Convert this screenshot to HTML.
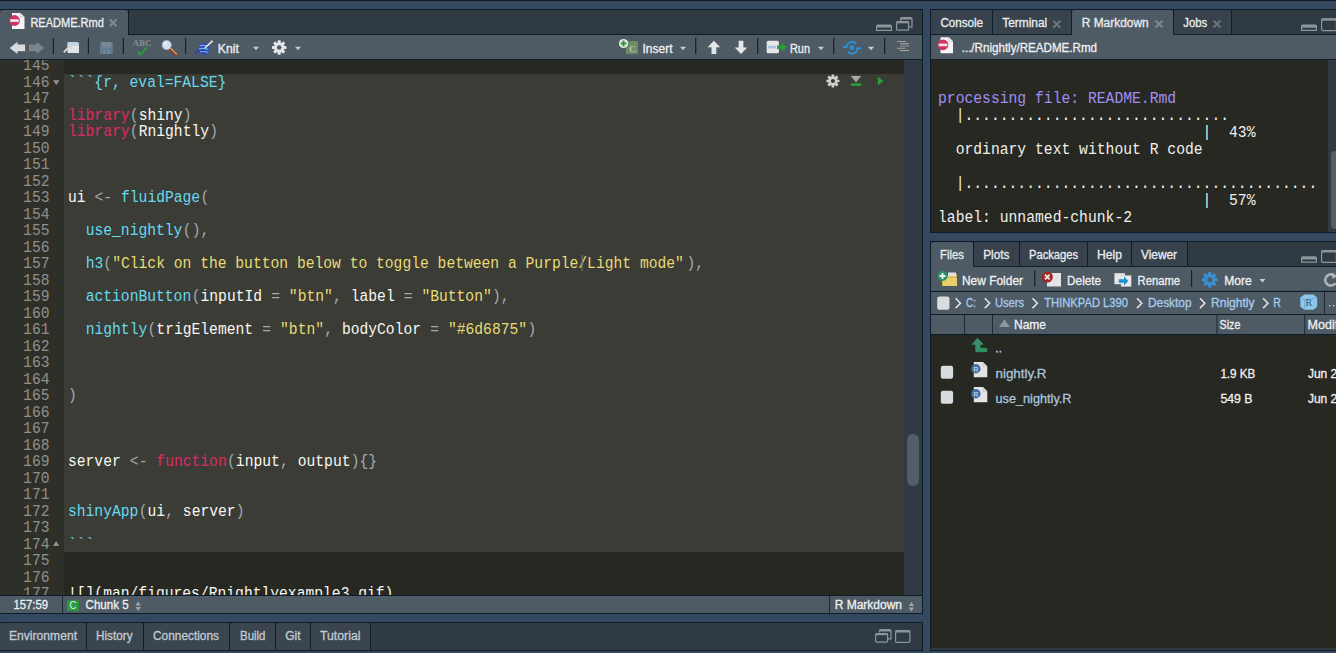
<!DOCTYPE html>
<html><head><meta charset="utf-8">
<style>
*{margin:0;padding:0}
html,body{width:1336px;height:653px;overflow:hidden;background:#34495f}
svg{display:block}
text{white-space:pre}
</style></head><body>
<svg width="1336" height="653" viewBox="0 0 1336 653">
<defs><clipPath id="edclip"><rect x="0" y="60" width="904" height="535"/></clipPath><clipPath id="conclip"><rect x="931" y="60" width="397" height="172"/></clipPath></defs>
<rect x="0" y="0" width="1336" height="653" fill="#34495f" />
<rect x="0" y="0" width="1336" height="1" fill="#101821" />
<rect x="0" y="10" width="922" height="25" fill="#2f3a43" />
<path d="M0,35 L0,14 Q0,10 4,10 L124,10 Q128,10 128,14 L128,35 Z" fill="#4e5a64"/>
<rect x="128" y="34" width="794" height="1" fill="#0f1c29" />
<rect x="0" y="35" width="922" height="24" fill="#4e5a64" />
<rect x="0" y="59" width="922" height="1" fill="#0f1c29" />
<rect x="0" y="60" width="904" height="535" fill="#272822" />
<rect x="0" y="60" width="64" height="535" fill="#2f2f29" />
<rect x="64" y="74" width="840" height="478" fill="#3c3c36" />
<rect x="904" y="60" width="18" height="535" fill="#2f3a43" />
<g clip-path="url(#edclip)">
<text transform="translate(0,70) scale(1,1.14)" x="49.5" y="0" text-anchor="end" font-family="Liberation Mono" font-size="14.67" fill="#8f908a">145</text>
<text transform="translate(0,87) scale(1,1.14)" x="49.5" y="0" text-anchor="end" font-family="Liberation Mono" font-size="14.67" fill="#8f908a">146</text>
<text transform="translate(0,87) scale(1,1.1)" x="68.00" y="0" font-family="Liberation Mono" font-size="14.67" fill="#66d9ef">```{r, eval=FALSE}</text>
<text transform="translate(0,103) scale(1,1.14)" x="49.5" y="0" text-anchor="end" font-family="Liberation Mono" font-size="14.67" fill="#8f908a">147</text>
<text transform="translate(0,120) scale(1,1.14)" x="49.5" y="0" text-anchor="end" font-family="Liberation Mono" font-size="14.67" fill="#8f908a">148</text>
<text transform="translate(0,120) scale(1,1.1)" x="68.00" y="0" font-family="Liberation Mono" font-size="14.67" fill="#dc2a66">library</text>
<text transform="translate(0,120) scale(1,1.1)" x="129.84" y="0" font-family="Liberation Mono" font-size="14.67" fill="#a4aaae">(</text>
<text transform="translate(0,120) scale(1,1.1)" x="138.68" y="0" font-family="Liberation Mono" font-size="14.67" fill="#f8f8f2">shiny</text>
<text transform="translate(0,120) scale(1,1.1)" x="182.86" y="0" font-family="Liberation Mono" font-size="14.67" fill="#a4aaae">)</text>
<text transform="translate(0,136) scale(1,1.14)" x="49.5" y="0" text-anchor="end" font-family="Liberation Mono" font-size="14.67" fill="#8f908a">149</text>
<text transform="translate(0,136) scale(1,1.1)" x="68.00" y="0" font-family="Liberation Mono" font-size="14.67" fill="#dc2a66">library</text>
<text transform="translate(0,136) scale(1,1.1)" x="129.84" y="0" font-family="Liberation Mono" font-size="14.67" fill="#a4aaae">(</text>
<text transform="translate(0,136) scale(1,1.1)" x="138.68" y="0" font-family="Liberation Mono" font-size="14.67" fill="#f8f8f2">Rnightly</text>
<text transform="translate(0,136) scale(1,1.1)" x="209.36" y="0" font-family="Liberation Mono" font-size="14.67" fill="#a4aaae">)</text>
<text transform="translate(0,153) scale(1,1.14)" x="49.5" y="0" text-anchor="end" font-family="Liberation Mono" font-size="14.67" fill="#8f908a">150</text>
<text transform="translate(0,169) scale(1,1.14)" x="49.5" y="0" text-anchor="end" font-family="Liberation Mono" font-size="14.67" fill="#8f908a">151</text>
<text transform="translate(0,186) scale(1,1.14)" x="49.5" y="0" text-anchor="end" font-family="Liberation Mono" font-size="14.67" fill="#8f908a">152</text>
<text transform="translate(0,202) scale(1,1.14)" x="49.5" y="0" text-anchor="end" font-family="Liberation Mono" font-size="14.67" fill="#8f908a">153</text>
<text transform="translate(0,202) scale(1,1.1)" x="68.00" y="0" font-family="Liberation Mono" font-size="14.67" fill="#f8f8f2">ui </text>
<text transform="translate(0,202) scale(1,1.1)" x="94.50" y="0" font-family="Liberation Mono" font-size="14.67" fill="#a4aaae">&lt;-</text>
<text transform="translate(0,202) scale(1,1.1)" x="121.01" y="0" font-family="Liberation Mono" font-size="14.67" fill="#66d9ef">fluidPage</text>
<text transform="translate(0,202) scale(1,1.1)" x="200.53" y="0" font-family="Liberation Mono" font-size="14.67" fill="#a4aaae">(</text>
<text transform="translate(0,219) scale(1,1.14)" x="49.5" y="0" text-anchor="end" font-family="Liberation Mono" font-size="14.67" fill="#8f908a">154</text>
<text transform="translate(0,235) scale(1,1.14)" x="49.5" y="0" text-anchor="end" font-family="Liberation Mono" font-size="14.67" fill="#8f908a">155</text>
<text transform="translate(0,235) scale(1,1.1)" x="85.67" y="0" font-family="Liberation Mono" font-size="14.67" fill="#66d9ef">use_nightly</text>
<text transform="translate(0,235) scale(1,1.1)" x="182.86" y="0" font-family="Liberation Mono" font-size="14.67" fill="#a4aaae">(),</text>
<text transform="translate(0,252) scale(1,1.14)" x="49.5" y="0" text-anchor="end" font-family="Liberation Mono" font-size="14.67" fill="#8f908a">156</text>
<text transform="translate(0,268) scale(1,1.14)" x="49.5" y="0" text-anchor="end" font-family="Liberation Mono" font-size="14.67" fill="#8f908a">157</text>
<text transform="translate(0,268) scale(1,1.1)" x="85.67" y="0" font-family="Liberation Mono" font-size="14.67" fill="#66d9ef">h3</text>
<text transform="translate(0,268) scale(1,1.1)" x="103.34" y="0" font-family="Liberation Mono" font-size="14.67" fill="#a4aaae">(</text>
<text transform="translate(0,268) scale(1,1.1)" x="112.18" y="0" font-family="Liberation Mono" font-size="14.67" fill="#e6db74">"Click on the button below to toggle between a Purple/Light mode"</text>
<text transform="translate(0,268) scale(1,1.1)" x="686.45" y="0" font-family="Liberation Mono" font-size="14.67" fill="#a4aaae">),</text>
<text transform="translate(0,285) scale(1,1.14)" x="49.5" y="0" text-anchor="end" font-family="Liberation Mono" font-size="14.67" fill="#8f908a">158</text>
<text transform="translate(0,301) scale(1,1.14)" x="49.5" y="0" text-anchor="end" font-family="Liberation Mono" font-size="14.67" fill="#8f908a">159</text>
<text transform="translate(0,301) scale(1,1.1)" x="85.67" y="0" font-family="Liberation Mono" font-size="14.67" fill="#66d9ef">actionButton</text>
<text transform="translate(0,301) scale(1,1.1)" x="191.69" y="0" font-family="Liberation Mono" font-size="14.67" fill="#a4aaae">(</text>
<text transform="translate(0,301) scale(1,1.1)" x="200.53" y="0" font-family="Liberation Mono" font-size="14.67" fill="#f8f8f2">inputId </text>
<text transform="translate(0,301) scale(1,1.1)" x="271.21" y="0" font-family="Liberation Mono" font-size="14.67" fill="#a4aaae">=</text>
<text transform="translate(0,301) scale(1,1.1)" x="288.88" y="0" font-family="Liberation Mono" font-size="14.67" fill="#e6db74">"btn"</text>
<text transform="translate(0,301) scale(1,1.1)" x="333.05" y="0" font-family="Liberation Mono" font-size="14.67" fill="#a4aaae">,</text>
<text transform="translate(0,301) scale(1,1.1)" x="350.72" y="0" font-family="Liberation Mono" font-size="14.67" fill="#f8f8f2">label </text>
<text transform="translate(0,301) scale(1,1.1)" x="403.73" y="0" font-family="Liberation Mono" font-size="14.67" fill="#a4aaae">=</text>
<text transform="translate(0,301) scale(1,1.1)" x="421.40" y="0" font-family="Liberation Mono" font-size="14.67" fill="#e6db74">"Button"</text>
<text transform="translate(0,301) scale(1,1.1)" x="492.08" y="0" font-family="Liberation Mono" font-size="14.67" fill="#a4aaae">),</text>
<text transform="translate(0,318) scale(1,1.14)" x="49.5" y="0" text-anchor="end" font-family="Liberation Mono" font-size="14.67" fill="#8f908a">160</text>
<text transform="translate(0,334) scale(1,1.14)" x="49.5" y="0" text-anchor="end" font-family="Liberation Mono" font-size="14.67" fill="#8f908a">161</text>
<text transform="translate(0,334) scale(1,1.1)" x="85.67" y="0" font-family="Liberation Mono" font-size="14.67" fill="#66d9ef">nightly</text>
<text transform="translate(0,334) scale(1,1.1)" x="147.52" y="0" font-family="Liberation Mono" font-size="14.67" fill="#a4aaae">(</text>
<text transform="translate(0,334) scale(1,1.1)" x="156.35" y="0" font-family="Liberation Mono" font-size="14.67" fill="#f8f8f2">trigElement </text>
<text transform="translate(0,334) scale(1,1.1)" x="262.37" y="0" font-family="Liberation Mono" font-size="14.67" fill="#a4aaae">=</text>
<text transform="translate(0,334) scale(1,1.1)" x="280.04" y="0" font-family="Liberation Mono" font-size="14.67" fill="#e6db74">"btn"</text>
<text transform="translate(0,334) scale(1,1.1)" x="324.22" y="0" font-family="Liberation Mono" font-size="14.67" fill="#a4aaae">,</text>
<text transform="translate(0,334) scale(1,1.1)" x="341.89" y="0" font-family="Liberation Mono" font-size="14.67" fill="#f8f8f2">bodyColor </text>
<text transform="translate(0,334) scale(1,1.1)" x="430.24" y="0" font-family="Liberation Mono" font-size="14.67" fill="#a4aaae">=</text>
<text transform="translate(0,334) scale(1,1.1)" x="447.91" y="0" font-family="Liberation Mono" font-size="14.67" fill="#e6db74">"#6d6875"</text>
<text transform="translate(0,334) scale(1,1.1)" x="527.42" y="0" font-family="Liberation Mono" font-size="14.67" fill="#a4aaae">)</text>
<text transform="translate(0,351) scale(1,1.14)" x="49.5" y="0" text-anchor="end" font-family="Liberation Mono" font-size="14.67" fill="#8f908a">162</text>
<text transform="translate(0,367) scale(1,1.14)" x="49.5" y="0" text-anchor="end" font-family="Liberation Mono" font-size="14.67" fill="#8f908a">163</text>
<text transform="translate(0,384) scale(1,1.14)" x="49.5" y="0" text-anchor="end" font-family="Liberation Mono" font-size="14.67" fill="#8f908a">164</text>
<text transform="translate(0,400) scale(1,1.14)" x="49.5" y="0" text-anchor="end" font-family="Liberation Mono" font-size="14.67" fill="#8f908a">165</text>
<text transform="translate(0,400) scale(1,1.1)" x="68.00" y="0" font-family="Liberation Mono" font-size="14.67" fill="#a4aaae">)</text>
<text transform="translate(0,417) scale(1,1.14)" x="49.5" y="0" text-anchor="end" font-family="Liberation Mono" font-size="14.67" fill="#8f908a">166</text>
<text transform="translate(0,433) scale(1,1.14)" x="49.5" y="0" text-anchor="end" font-family="Liberation Mono" font-size="14.67" fill="#8f908a">167</text>
<text transform="translate(0,450) scale(1,1.14)" x="49.5" y="0" text-anchor="end" font-family="Liberation Mono" font-size="14.67" fill="#8f908a">168</text>
<text transform="translate(0,466) scale(1,1.14)" x="49.5" y="0" text-anchor="end" font-family="Liberation Mono" font-size="14.67" fill="#8f908a">169</text>
<text transform="translate(0,466) scale(1,1.1)" x="68.00" y="0" font-family="Liberation Mono" font-size="14.67" fill="#f8f8f2">server </text>
<text transform="translate(0,466) scale(1,1.1)" x="129.84" y="0" font-family="Liberation Mono" font-size="14.67" fill="#a4aaae">&lt;-</text>
<text transform="translate(0,466) scale(1,1.1)" x="156.35" y="0" font-family="Liberation Mono" font-size="14.67" fill="#dc2a66">function</text>
<text transform="translate(0,466) scale(1,1.1)" x="227.03" y="0" font-family="Liberation Mono" font-size="14.67" fill="#a4aaae">(</text>
<text transform="translate(0,466) scale(1,1.1)" x="235.87" y="0" font-family="Liberation Mono" font-size="14.67" fill="#f8f8f2">input</text>
<text transform="translate(0,466) scale(1,1.1)" x="280.04" y="0" font-family="Liberation Mono" font-size="14.67" fill="#a4aaae">,</text>
<text transform="translate(0,466) scale(1,1.1)" x="297.71" y="0" font-family="Liberation Mono" font-size="14.67" fill="#f8f8f2">output</text>
<text transform="translate(0,466) scale(1,1.1)" x="350.72" y="0" font-family="Liberation Mono" font-size="14.67" fill="#a4aaae">){}</text>
<text transform="translate(0,483) scale(1,1.14)" x="49.5" y="0" text-anchor="end" font-family="Liberation Mono" font-size="14.67" fill="#8f908a">170</text>
<text transform="translate(0,499) scale(1,1.14)" x="49.5" y="0" text-anchor="end" font-family="Liberation Mono" font-size="14.67" fill="#8f908a">171</text>
<text transform="translate(0,516) scale(1,1.14)" x="49.5" y="0" text-anchor="end" font-family="Liberation Mono" font-size="14.67" fill="#8f908a">172</text>
<text transform="translate(0,516) scale(1,1.1)" x="68.00" y="0" font-family="Liberation Mono" font-size="14.67" fill="#66d9ef">shinyApp</text>
<text transform="translate(0,516) scale(1,1.1)" x="138.68" y="0" font-family="Liberation Mono" font-size="14.67" fill="#a4aaae">(</text>
<text transform="translate(0,516) scale(1,1.1)" x="147.52" y="0" font-family="Liberation Mono" font-size="14.67" fill="#f8f8f2">ui</text>
<text transform="translate(0,516) scale(1,1.1)" x="165.19" y="0" font-family="Liberation Mono" font-size="14.67" fill="#a4aaae">,</text>
<text transform="translate(0,516) scale(1,1.1)" x="182.86" y="0" font-family="Liberation Mono" font-size="14.67" fill="#f8f8f2">server</text>
<text transform="translate(0,516) scale(1,1.1)" x="235.87" y="0" font-family="Liberation Mono" font-size="14.67" fill="#a4aaae">)</text>
<text transform="translate(0,532) scale(1,1.14)" x="49.5" y="0" text-anchor="end" font-family="Liberation Mono" font-size="14.67" fill="#8f908a">173</text>
<text transform="translate(0,549) scale(1,1.14)" x="49.5" y="0" text-anchor="end" font-family="Liberation Mono" font-size="14.67" fill="#8f908a">174</text>
<text transform="translate(0,549) scale(1,1.1)" x="68.00" y="0" font-family="Liberation Mono" font-size="14.67" fill="#66d9ef">```</text>
<text transform="translate(0,565) scale(1,1.14)" x="49.5" y="0" text-anchor="end" font-family="Liberation Mono" font-size="14.67" fill="#8f908a">175</text>
<text transform="translate(0,582) scale(1,1.14)" x="49.5" y="0" text-anchor="end" font-family="Liberation Mono" font-size="14.67" fill="#8f908a">176</text>
<text transform="translate(0,598) scale(1,1.14)" x="49.5" y="0" text-anchor="end" font-family="Liberation Mono" font-size="14.67" fill="#8f908a">177</text>
<text transform="translate(0,598) scale(1,1.1)" x="68.00" y="0" font-family="Liberation Mono" font-size="14.67" fill="#f8f8f2">![](man/figures/Rnightlyexample3.gif)</text>
</g>
<rect x="0" y="595" width="922" height="1" fill="#0f1c29" />
<rect x="0" y="596" width="922" height="17.5" fill="#4e5a64" />
<rect x="62" y="596" width="1" height="17.5" fill="#1e2933" />
<rect x="829" y="596" width="1" height="17.5" fill="#1e2933" />
<path d="M12,13 L20.5,13 L24.5,17 L24.5,29 L12,29 Z" fill="#f6f6f6"/>
<path d="M20.5,13 L20.5,17 L24.5,17" fill="none" stroke="#b0b0b0" stroke-width="0.6"/>
<circle cx="14.5" cy="20.5" r="5.4" fill="#cf3462"/>
<rect x="10.2" y="19.3" width="8.6" height="2.6" fill="#f2e6ea"/>
<text x="30.4" y="27" font-family="Liberation Sans" font-size="12.5" fill="#eef0f2" textLength="73.4" lengthAdjust="spacingAndGlyphs" stroke="#eef0f2" stroke-width="0.3" >README.Rmd</text>
<path d="M109.8,19.6 L116.39999999999999,26.200000000000003 M116.39999999999999,19.6 L109.8,26.200000000000003" stroke="#86898a" stroke-width="2.1"/>
<rect x="128" y="10" width="1" height="25" fill="#0f1c29" />
<path d="M877.5,24.4 L890.5,24.4 Q892,24.4 892,25.9 L892,30.9 L876,30.9 L876,25.9 Q876,24.4 877.5,24.4 Z M877.2,27.599999999999998 L877.2,29.7 L890.8,29.7 L890.8,27.599999999999998 Z" fill="#8c959c" fill-rule="evenodd"/>
<path d="M900.5,20.7 L900.5,19.0 Q900.5,17.7 901.8,17.7 L910.7,17.7 Q912,17.7 912,19.0 L912,26.9 L909,26.9" fill="none" stroke="#8c959c" stroke-width="1.2"/>
<rect x="900.8" y="18.0" width="10.9" height="1.6" fill="#8c959c"/>
<rect x="896.6" y="21.599999999999998" width="12" height="8.6" rx="1" fill="#2e3a45" stroke="#8c959c" stroke-width="1.2"/>
<rect x="896.6" y="21.3" width="12" height="2" fill="#8c959c"/>
<path d="M9.7,47.9 L17.5,41.8 L17.5,44.6 L25.1,44.6 L25.1,51.2 L17.5,51.2 L17.5,54 Z" fill="#d9dcdf"/>
<path d="M44.3,47.9 L36.5,41.8 L36.5,44.6 L28.9,44.6 L28.9,51.2 L36.5,51.2 L36.5,54 Z" fill="#7c838a"/>
<rect x="52.8" y="38" width="1.2" height="16" fill="#17212b" />
<rect x="87.8" y="38" width="1.2" height="16" fill="#17212b" />
<rect x="122.8" y="38" width="1.2" height="16" fill="#17212b" />
<rect x="185.0" y="38" width="1.2" height="16" fill="#17212b" />
<path d="M67.6,42 L76.5,42 Q79,42 79,44.5 L79,53 L67.6,53 Z" fill="#e3e3e3"/>
<path d="M67.6,42 L76.5,42 Q79,42 79,44.5 L79,46 L67.6,46 Z" fill="#c2d3e3"/>
<path d="M63.8,52.3 L70,46.3" stroke="#d0d8de" stroke-width="2"/><path d="M67,45 L71.8,45 L71.8,49.8 Z" fill="#d0d8de"/>
<path d="M100,42 L112.8,42 L112.8,54 L100,54 Z" fill="#5d7b95"/><rect x="102" y="42" width="9" height="5.5" fill="#7a8793"/><rect x="103.5" y="50" width="6" height="4" fill="#7a8793"/><rect x="105" y="50.5" width="2.5" height="3.5" fill="#5d7b95"/>
<text x="132.6" y="45.5" font-family="Liberation Serif" font-size="7.5" fill="#8a8e90" textLength="18.7" lengthAdjust="spacingAndGlyphs" font-weight="bold">ABC</text>
<path d="M137.5,51.5 L140.5,54.5 L147,47.5" fill="none" stroke="#2aa33a" stroke-width="1.8"/>
<path d="M169.8,48.8 L176,54.6" stroke="#a83232" stroke-width="2.6" stroke-linecap="round"/>
<path d="M170.6,48.3 L176.6,54" stroke="#d4b45a" stroke-width="1.1" stroke-linecap="round"/>
<circle cx="166.7" cy="45" r="4.6" fill="#d6def0" stroke="#a8bad8" stroke-width="0.8"/>
<circle cx="165.5" cy="43.6" r="1.8" fill="#eef0f2"/>
<ellipse cx="204" cy="49" rx="5.8" ry="6" fill="#3444b4"/>
<path d="M199.5,46 Q203,44.5 207,46 M199,49 Q203,47.5 208.5,49.5 M200,52 Q204,50.8 208,52.5" stroke="#68c0e6" stroke-width="1.1" fill="none"/>
<path d="M199,50.5 Q196,51 194.2,53.8" stroke="#3040b0" stroke-width="1.3" fill="none"/>
<path d="M205.5,47.5 L213,40.3" stroke="#e6e6e6" stroke-width="1.7" stroke-linecap="round"/>
<circle cx="213.3" cy="40" r="0.9" fill="#303030"/>
<text x="217.8" y="52.7" font-family="Liberation Sans" font-size="12" fill="#eef0f2" textLength="21" lengthAdjust="spacingAndGlyphs" stroke="#eef0f2" stroke-width="0.3" >Knit</text>
<path d="M253,46.7 L259,46.7 L256,50.2 Z" fill="#c9cdd1"/>
<circle cx="279.2" cy="47.5" r="5.18" fill="#e6e6e6"/>
<rect x="277.69" y="40.30" width="3.02" height="14.40" rx="0.4" fill="#e6e6e6" transform="rotate(0 279.2 47.5)"/>
<rect x="277.69" y="40.30" width="3.02" height="14.40" rx="0.4" fill="#e6e6e6" transform="rotate(45 279.2 47.5)"/>
<rect x="277.69" y="40.30" width="3.02" height="14.40" rx="0.4" fill="#e6e6e6" transform="rotate(90 279.2 47.5)"/>
<rect x="277.69" y="40.30" width="3.02" height="14.40" rx="0.4" fill="#e6e6e6" transform="rotate(135 279.2 47.5)"/>
<circle cx="279.2" cy="47.5" r="2.30" fill="#4e5a64"/>
<path d="M295,46.7 L301,46.7 L298,50.2 Z" fill="#c9cdd1"/>
<rect x="626" y="41" width="12" height="13" fill="#6e8a66"/>
<text x="629.5" y="52" font-family="Liberation Serif" font-size="9" fill="#dfe3dc" textLength="6" lengthAdjust="spacingAndGlyphs" >C</text>
<circle cx="623.5" cy="43.5" r="4.6" fill="#e8e8e8"/><path d="M623.5,40.6 L623.5,46.4 M620.6,43.5 L626.4,43.5" stroke="#2a9a36" stroke-width="2"/>
<text x="642.5" y="52.8" font-family="Liberation Sans" font-size="12" fill="#eef0f2" textLength="30" lengthAdjust="spacingAndGlyphs" stroke="#eef0f2" stroke-width="0.3" >Insert</text>
<path d="M680,46.7 L686,46.7 L683,50.2 Z" fill="#c9cdd1"/>
<rect x="695.1" y="38" width="1.2" height="16" fill="#17212b" />
<path d="M713.9,40.8 L720.2,47.2 L716.3,47.2 L716.3,54 L711.5,54 L711.5,47.2 L707.6,47.2 Z" fill="#e3e5e7"/>
<path d="M741,54 L747.3,47.6 L743.4,47.6 L743.4,40.8 L738.6,40.8 L738.6,47.6 L734.7,47.6 Z" fill="#e3e5e7"/>
<rect x="757.1" y="38" width="1.2" height="16" fill="#17212b" />
<rect x="766.7" y="40.8" width="12.2" height="12.4" rx="1.5" fill="#e6e6e6"/><rect x="768" y="45.8" width="8" height="2.6" fill="#a8c4ec"/>
<path d="M777,45.5 L781.5,45.5 L781.5,42.8 L787.2,47.2 L781.5,51.6 L781.5,48.9 L777,48.9 Z" fill="#2a9a3a"/>
<text x="790" y="52.9" font-family="Liberation Sans" font-size="12" fill="#eef0f2" textLength="20" lengthAdjust="spacingAndGlyphs" stroke="#eef0f2" stroke-width="0.3" >Run</text>
<path d="M818,46.7 L824,46.7 L821,50.2 Z" fill="#c9cdd1"/>
<rect x="833.1" y="38" width="1.2" height="16" fill="#17212b" />
<path d="M843,47 L846.6,47 A5.3,5.3 0 0 1 856,43.8" stroke="#2a8fd8" stroke-width="2" fill="none"/>
<path d="M861,48.2 L857.2,48.2 A5.3,5.3 0 0 1 847.8,51.6" stroke="#2a8fd8" stroke-width="2" fill="none"/>
<circle cx="851.8" cy="47.6" r="2.3" fill="#2a8fd8"/>
<path d="M868,46.7 L874,46.7 L871,50.2 Z" fill="#c9cdd1"/>
<rect x="884.0" y="38" width="1.2" height="16" fill="#17212b" />
<rect x="897" y="41.0" width="9" height="1.1" fill="#9a9c9c" />
<rect x="900" y="43.25" width="9" height="1.1" fill="#a4a6a6" />
<rect x="900" y="45.5" width="9" height="1.1" fill="#8e8e88" />
<rect x="897" y="47.75" width="8.5" height="1.1" fill="#a09a86" />
<rect x="900" y="50.0" width="9" height="1.1" fill="#a4a6a4" />
<circle cx="832.9" cy="81" r="4.68" fill="#d0d0cc"/>
<rect x="831.53" y="74.50" width="2.73" height="13.00" rx="0.4" fill="#d0d0cc" transform="rotate(0 832.9 81)"/>
<rect x="831.53" y="74.50" width="2.73" height="13.00" rx="0.4" fill="#d0d0cc" transform="rotate(45 832.9 81)"/>
<rect x="831.53" y="74.50" width="2.73" height="13.00" rx="0.4" fill="#d0d0cc" transform="rotate(90 832.9 81)"/>
<rect x="831.53" y="74.50" width="2.73" height="13.00" rx="0.4" fill="#d0d0cc" transform="rotate(135 832.9 81)"/>
<circle cx="832.9" cy="81" r="2.08" fill="#3c3c36"/>
<path d="M850.7,76 L861.2,76 L856,82.2 Z" fill="#a8a8a4"/><rect x="851" y="83.2" width="10.2" height="2.8" fill="#2a9a3a"/>
<path d="M877.8,76.4 L883.4,81 L877.8,85.6 Z" fill="#2a9a3a"/>
<rect x="581.5" y="255" width="1.3" height="16" fill="#70726c" />
<rect x="907" y="434" width="12" height="52" rx="6" fill="#515d67"/>
<text x="13.5" y="608.8" font-family="Liberation Sans" font-size="12" fill="#eef0f2" textLength="34.4" lengthAdjust="spacingAndGlyphs" stroke="#eef0f2" stroke-width="0.3" >157:59</text>
<rect x="66.9" y="600.3" width="12" height="10.6" rx="1" fill="#2a9a3a"/>
<text x="69.6" y="609.2" font-family="Liberation Sans" font-size="10.5" fill="#e8ece8" textLength="6.8" lengthAdjust="spacingAndGlyphs" >C</text>
<text x="85.6" y="608.8" font-family="Liberation Sans" font-size="12" fill="#eef0f2" textLength="43" lengthAdjust="spacingAndGlyphs" stroke="#eef0f2" stroke-width="0.3" >Chunk 5</text>
<path d="M135.5,605.5 L138.2,601.5 L140.9,605.5 Z M135.5,607.0 L138.2,611.0 L140.9,607.0 Z" fill="#a3a6a8"/>
<text x="834.7" y="608.8" font-family="Liberation Sans" font-size="12" fill="#eef0f2" textLength="67.3" lengthAdjust="spacingAndGlyphs" stroke="#eef0f2" stroke-width="0.3" >R Markdown</text>
<path d="M908.7,606 L911.4000000000001,602 L914.1,606 Z M908.7,607.5 L911.4000000000001,611.5 L914.1,607.5 Z" fill="#a3a6a8"/>
<rect x="0" y="623" width="922" height="27" fill="#2f3a43" />
<rect x="0" y="650" width="922" height="1" fill="#0f1c29" />
<path d="M0,650 L0,626 Q0,623 3,623 L83,623 Q86,623 86,626 L86,650 Z" fill="#3a4550"/>
<path d="M87,650 L87,626 Q87,623 90,623 L140,623 Q143,623 143,626 L143,650 Z" fill="#3a4550"/>
<path d="M144,650 L144,626 Q144,623 147,623 L226,623 Q229,623 229,626 L229,650 Z" fill="#3a4550"/>
<path d="M230,650 L230,626 Q230,623 233,623 L272,623 Q275,623 275,626 L275,650 Z" fill="#3a4550"/>
<path d="M276,650 L276,626 Q276,623 279,623 L307,623 Q310,623 310,626 L310,650 Z" fill="#3a4550"/>
<path d="M311,650 L311,626 Q311,623 314,623 L367,623 Q370,623 370,626 L370,650 Z" fill="#3a4550"/>
<rect x="86" y="623" width="1" height="27" fill="#0f1c29" />
<rect x="143" y="623" width="1" height="27" fill="#0f1c29" />
<rect x="229" y="623" width="1" height="27" fill="#0f1c29" />
<rect x="275" y="623" width="1" height="27" fill="#0f1c29" />
<rect x="310" y="623" width="1" height="27" fill="#0f1c29" />
<rect x="370" y="623" width="1" height="27" fill="#0f1c29" />
<text x="9" y="640" font-family="Liberation Sans" font-size="12" fill="#c2cad2" textLength="68" lengthAdjust="spacingAndGlyphs" stroke="#c2cad2" stroke-width="0.3" >Environment</text>
<text x="96" y="640" font-family="Liberation Sans" font-size="12" fill="#c2cad2" textLength="36.5" lengthAdjust="spacingAndGlyphs" stroke="#c2cad2" stroke-width="0.3" >History</text>
<text x="153" y="640" font-family="Liberation Sans" font-size="12" fill="#c2cad2" textLength="66" lengthAdjust="spacingAndGlyphs" stroke="#c2cad2" stroke-width="0.3" >Connections</text>
<text x="240" y="640" font-family="Liberation Sans" font-size="12" fill="#c2cad2" textLength="25.5" lengthAdjust="spacingAndGlyphs" stroke="#c2cad2" stroke-width="0.3" >Build</text>
<text x="285.2" y="640" font-family="Liberation Sans" font-size="12" fill="#c2cad2" textLength="15.5" lengthAdjust="spacingAndGlyphs" stroke="#c2cad2" stroke-width="0.3" >Git</text>
<text x="320" y="640" font-family="Liberation Sans" font-size="12" fill="#c2cad2" textLength="40.5" lengthAdjust="spacingAndGlyphs" stroke="#c2cad2" stroke-width="0.3" >Tutorial</text>
<path d="M879.5,632.6 L879.5,630.9 Q879.5,629.6 880.8,629.6 L889.7,629.6 Q891,629.6 891,630.9 L891,638.8000000000001 L888,638.8000000000001" fill="none" stroke="#8c959c" stroke-width="1.2"/>
<rect x="879.8" y="629.9" width="10.9" height="1.6" fill="#8c959c"/>
<rect x="875.6" y="633.5" width="12" height="8.6" rx="1" fill="#2e3a45" stroke="#8c959c" stroke-width="1.2"/>
<rect x="875.6" y="633.2" width="12" height="2" fill="#8c959c"/>
<rect x="895.6" y="630.6" width="14.3" height="11.8" rx="1.2" fill="none" stroke="#8c959c" stroke-width="1.2"/>
<rect x="895.6" y="630.3" width="14.3" height="2.2" fill="#8c959c"/>
<rect x="931" y="10" width="405" height="25" fill="#2f3a43" />
<rect x="931" y="34" width="405" height="1" fill="#0f1c29" />
<rect x="931" y="35" width="405" height="24" fill="#4e5a64" />
<rect x="931" y="59" width="405" height="1" fill="#0f1c29" />
<rect x="931" y="60" width="397" height="172" fill="#272822" />
<rect x="1328" y="60" width="8" height="172" fill="#2f3a43" />
<rect x="931" y="232" width="405" height="1" fill="#0f1c29" />
<rect x="931" y="242" width="405" height="25" fill="#2f3a43" />
<rect x="931" y="266" width="405" height="1" fill="#0f1c29" />
<rect x="931" y="267" width="405" height="23.5" fill="#4e5a64" />
<rect x="931" y="291" width="405" height="1" fill="#0f1c29" />
<rect x="931" y="292" width="405" height="22" fill="#4e5a64" />
<rect x="931" y="314" width="405" height="1" fill="#0f1c29" />
<rect x="931" y="315" width="405" height="19" fill="#4e5a64" />
<rect x="931" y="334" width="405" height="1" fill="#0f1c29" />
<rect x="931" y="335" width="405" height="313" fill="#272822" />
<rect x="931" y="648" width="405" height="2" fill="#2f3a43" />
<rect x="930" y="650" width="406" height="1" fill="#0f1c29" />
<path d="M931,34 L931,13 Q931,10 934,10 L989,10 Q992,10 992,13 L992,34 Z" fill="#37424d"/>
<path d="M993,34 L993,13 Q993,10 996,10 L1068,10 Q1071,10 1071,13 L1071,34 Z" fill="#37424d"/>
<path d="M1174,34 L1174,13 Q1174,10 1177,10 L1228,10 Q1231,10 1231,13 L1231,34 Z" fill="#37424d"/>
<path d="M1072,35 L1072,13 Q1072,10 1075,10 L1170,10 Q1173,10 1173,13 L1173,35 Z" fill="#4e5a64"/>
<rect x="992" y="10" width="1" height="25" fill="#0f1c29" />
<rect x="1071" y="10" width="1" height="25" fill="#0f1c29" />
<rect x="1173" y="10" width="1" height="25" fill="#0f1c29" />
<rect x="1231" y="10" width="1" height="24" fill="#0f1c29" />
<text x="940.4" y="26.8" font-family="Liberation Sans" font-size="12" fill="#e9ecef" textLength="42.6" lengthAdjust="spacingAndGlyphs" stroke="#e9ecef" stroke-width="0.3" >Console</text>
<text x="1002.2" y="26.8" font-family="Liberation Sans" font-size="12" fill="#e9ecef" textLength="45" lengthAdjust="spacingAndGlyphs" stroke="#e9ecef" stroke-width="0.3" >Terminal</text>
<path d="M1053.3,20.8 L1060.3,27.8 M1060.3,20.8 L1053.3,27.8" stroke="#6c747b" stroke-width="2"/>
<text x="1081.8" y="26.9" font-family="Liberation Sans" font-size="12" fill="#e9ecef" textLength="66.8" lengthAdjust="spacingAndGlyphs" stroke="#e9ecef" stroke-width="0.3" >R Markdown</text>
<path d="M1155.5,20.5 L1162.5,27.5 M1162.5,20.5 L1155.5,27.5" stroke="#7f868c" stroke-width="2"/>
<text x="1183.3" y="26.9" font-family="Liberation Sans" font-size="12" fill="#e9ecef" textLength="23.9" lengthAdjust="spacingAndGlyphs" stroke="#e9ecef" stroke-width="0.3" >Jobs</text>
<path d="M1213.5,20.5 L1220.5,27.5 M1220.5,20.5 L1213.5,27.5" stroke="#6c747b" stroke-width="2"/>
<path d="M1302.5,24.5 L1315.5,24.5 Q1317,24.5 1317,26.0 L1317,31.0 L1301,31.0 L1301,26.0 Q1301,24.5 1302.5,24.5 Z M1302.2,27.7 L1302.2,29.8 L1315.8,29.8 L1315.8,27.7 Z" fill="#8c959c" fill-rule="evenodd"/>
<rect x="1321.6" y="18.8" width="14.8" height="11.8" rx="1.2" fill="none" stroke="#8c959c" stroke-width="1.2"/>
<rect x="1321.6" y="18.5" width="14.8" height="2.2" fill="#8c959c"/>
<path d="M940.5,37.3 L949.0,37.3 L953.0,41.3 L953.0,53.3 L940.5,53.3 Z" fill="#f6f6f6"/>
<path d="M949.0,37.3 L949.0,41.3 L953.0,41.3" fill="none" stroke="#b0b0b0" stroke-width="0.6"/>
<circle cx="943.0" cy="44.8" r="5.4" fill="#cf3462"/>
<rect x="938.7" y="43.599999999999994" width="8.6" height="2.6" fill="#f2e6ea"/>
<text x="961.7" y="51.9" font-family="Liberation Sans" font-size="12" fill="#eef0f2" textLength="135.4" lengthAdjust="spacingAndGlyphs" stroke="#eef0f2" stroke-width="0.3" >.../Rnightly/README.Rmd</text>
<g clip-path="url(#conclip)">
<text transform="translate(0,102.5) scale(1,1.08)" x="938.00" y="0" font-family="Liberation Mono" font-size="14.67" fill="#a08ef2" textLength="238.14" lengthAdjust="spacingAndGlyphs">processing file: README.Rmd</text>
<text transform="translate(0,119.5) scale(1,1.08)" x="955.64" y="0" font-family="Liberation Mono" font-size="14.67" fill="#f0f0ec" textLength="273.42" lengthAdjust="spacingAndGlyphs">|..............................</text>
<text transform="translate(0,136.5) scale(1,1.08)" x="1202.60" y="0" font-family="Liberation Mono" font-size="14.67" fill="#f0f0ec" textLength="52.92" lengthAdjust="spacingAndGlyphs">|  43%</text>
<text transform="translate(0,153.5) scale(1,1.08)" x="955.64" y="0" font-family="Liberation Mono" font-size="14.67" fill="#f0f0ec" textLength="246.96" lengthAdjust="spacingAndGlyphs">ordinary text without R code</text>
<text transform="translate(0,187.5) scale(1,1.08)" x="955.64" y="0" font-family="Liberation Mono" font-size="14.67" fill="#f0f0ec" textLength="361.62" lengthAdjust="spacingAndGlyphs">|........................................</text>
<text transform="translate(0,204.5) scale(1,1.08)" x="1202.60" y="0" font-family="Liberation Mono" font-size="14.67" fill="#f0f0ec" textLength="52.92" lengthAdjust="spacingAndGlyphs">|  57%</text>
<text transform="translate(0,221.5) scale(1,1.08)" x="938.00" y="0" font-family="Liberation Mono" font-size="14.67" fill="#f0f0ec" textLength="194.04" lengthAdjust="spacingAndGlyphs">label: unnamed-chunk-2</text>
</g>
<rect x="1331" y="151" width="8" height="78" rx="4" fill="#535f69"/>
<path d="M974,266 L974,245 Q974,242 977,242 L1016,242 Q1019,242 1019,245 L1019,266 Z" fill="#37424d"/>
<path d="M1020,266 L1020,245 Q1020,242 1023,242 L1084,242 Q1087,242 1087,245 L1087,266 Z" fill="#37424d"/>
<path d="M1088,266 L1088,245 Q1088,242 1091,242 L1128,242 Q1131,242 1131,245 L1131,266 Z" fill="#37424d"/>
<path d="M1132,266 L1132,245 Q1132,242 1135,242 L1184,242 Q1187,242 1187,245 L1187,266 Z" fill="#37424d"/>
<path d="M931,267 L931,245 Q931,242 934,242 L970,242 Q973,242 973,245 L973,267 Z" fill="#4e5a64"/>
<rect x="973" y="242" width="1" height="24" fill="#0f1c29" />
<rect x="1019" y="242" width="1" height="24" fill="#0f1c29" />
<rect x="1087" y="242" width="1" height="24" fill="#0f1c29" />
<rect x="1131" y="242" width="1" height="24" fill="#0f1c29" />
<rect x="1187" y="242" width="1" height="24" fill="#0f1c29" />
<text x="940" y="258.8" font-family="Liberation Sans" font-size="12" fill="#e9ecef" textLength="24" lengthAdjust="spacingAndGlyphs" stroke="#e9ecef" stroke-width="0.3" >Files</text>
<text x="983.3" y="258.8" font-family="Liberation Sans" font-size="12" fill="#e9ecef" textLength="26" lengthAdjust="spacingAndGlyphs" stroke="#e9ecef" stroke-width="0.3" >Plots</text>
<text x="1029" y="258.8" font-family="Liberation Sans" font-size="12" fill="#e9ecef" textLength="49" lengthAdjust="spacingAndGlyphs" stroke="#e9ecef" stroke-width="0.3" >Packages</text>
<text x="1097" y="258.8" font-family="Liberation Sans" font-size="12" fill="#e9ecef" textLength="25" lengthAdjust="spacingAndGlyphs" stroke="#e9ecef" stroke-width="0.3" >Help</text>
<text x="1141" y="258.8" font-family="Liberation Sans" font-size="12" fill="#e9ecef" textLength="36" lengthAdjust="spacingAndGlyphs" stroke="#e9ecef" stroke-width="0.3" >Viewer</text>
<path d="M1302.5,256.3 L1315.5,256.3 Q1317,256.3 1317,257.8 L1317,262.8 L1301,262.8 L1301,257.8 Q1301,256.3 1302.5,256.3 Z M1302.2,259.5 L1302.2,261.6 L1315.8,261.6 L1315.8,259.5 Z" fill="#8c959c" fill-rule="evenodd"/>
<rect x="1321.6" y="250.6" width="14.8" height="11.8" rx="1.2" fill="none" stroke="#8c959c" stroke-width="1.2"/>
<rect x="1321.6" y="250.3" width="14.8" height="2.2" fill="#8c959c"/>
<path d="M942,276 L948,276 L949.5,274 L956.8,274 L956.8,286 L942,286 Z" fill="#d6b84a"/><rect x="943" y="278" width="14" height="8" fill="#e8cf6a"/><rect x="948" y="272.5" width="8" height="4" fill="#e0e0e0"/>
<circle cx="942.5" cy="276" r="5" fill="#2e8e6a"/><path d="M942.5,273 L942.5,279 M939.5,276 L945.5,276" stroke="#e8f0ec" stroke-width="2"/>
<text x="962" y="284.9" font-family="Liberation Sans" font-size="12" fill="#eef0f2" textLength="61" lengthAdjust="spacingAndGlyphs" stroke="#eef0f2" stroke-width="0.3" >New Folder</text>
<rect x="1034.1" y="270" width="1.2" height="17" fill="#17212b" />
<rect x="1047" y="273" width="14" height="13.5" fill="#e4e4e4"/><circle cx="1047.3" cy="277" r="5.6" fill="#a02828"/><path d="M1045,274.7 L1049.6,279.3 M1049.6,274.7 L1045,279.3" stroke="#f0e6e6" stroke-width="1.8"/>
<text x="1067.1" y="284.9" font-family="Liberation Sans" font-size="12" fill="#eef0f2" textLength="34" lengthAdjust="spacingAndGlyphs" stroke="#eef0f2" stroke-width="0.3" >Delete</text>
<rect x="1114.4" y="273.2" width="10.5" height="11" fill="#e6e6e6"/><rect x="1121.1" y="275.6" width="10" height="10.9" fill="#ebebeb" stroke="#c8c8c8" stroke-width="0.4"/><path d="M1118.8,279.3 L1124,279.3 L1124,276.6 L1128.3,281 L1124,285.4 L1124,282.7 L1118.8,282.7 Z" fill="#1f90d0"/>
<text x="1137.6" y="284.9" font-family="Liberation Sans" font-size="12" fill="#eef0f2" textLength="42.4" lengthAdjust="spacingAndGlyphs" stroke="#eef0f2" stroke-width="0.3" >Rename</text>
<rect x="1191.0" y="270" width="1.2" height="17" fill="#17212b" />
<circle cx="1209.8" cy="279.7" r="5.62" fill="#3b8fd0"/>
<rect x="1208.16" y="271.90" width="3.28" height="15.60" rx="0.4" fill="#3b8fd0" transform="rotate(0 1209.8 279.7)"/>
<rect x="1208.16" y="271.90" width="3.28" height="15.60" rx="0.4" fill="#3b8fd0" transform="rotate(45 1209.8 279.7)"/>
<rect x="1208.16" y="271.90" width="3.28" height="15.60" rx="0.4" fill="#3b8fd0" transform="rotate(90 1209.8 279.7)"/>
<rect x="1208.16" y="271.90" width="3.28" height="15.60" rx="0.4" fill="#3b8fd0" transform="rotate(135 1209.8 279.7)"/>
<circle cx="1209.8" cy="279.7" r="2.50" fill="#4e5a64"/>
<text x="1224.2" y="284.9" font-family="Liberation Sans" font-size="12" fill="#eef0f2" textLength="27.5" lengthAdjust="spacingAndGlyphs" stroke="#eef0f2" stroke-width="0.3" >More</text>
<path d="M1259.5,279 L1265.5,279 L1262.5,282.5 Z" fill="#c9cdd1"/>
<path d="M1335.2,276.5 A5.6,5.6 0 1 0 1335.4,283.2" fill="none" stroke="#aeb3b7" stroke-width="2.6"/><path d="M1332.5,272.5 L1337.5,276.8 L1332,278.8 Z" fill="#aeb3b7"/>
<rect x="937.2" y="296.5" width="12.3" height="13.2" rx="2.2" fill="#d9dcde"/>
<path d="M955.5999999999999,298.3 L960.4,303.2 L955.5999999999999,308.1" fill="none" stroke="#dfe2e5" stroke-width="1.6"/>
<text x="966" y="306.7" font-family="Liberation Sans" font-size="12" fill="#a6ccee" textLength="10" lengthAdjust="spacingAndGlyphs" stroke="#a6ccee" stroke-width="0.3" >C:</text>
<path d="M984.8,298.3 L989.6,303.2 L984.8,308.1" fill="none" stroke="#dfe2e5" stroke-width="1.6"/>
<text x="995" y="306.7" font-family="Liberation Sans" font-size="12" fill="#a6ccee" textLength="29" lengthAdjust="spacingAndGlyphs" stroke="#a6ccee" stroke-width="0.3" >Users</text>
<path d="M1032.5,298.3 L1037.3,303.2 L1032.5,308.1" fill="none" stroke="#dfe2e5" stroke-width="1.6"/>
<text x="1044.2" y="306.7" font-family="Liberation Sans" font-size="12" fill="#a6ccee" textLength="83.8" lengthAdjust="spacingAndGlyphs" stroke="#a6ccee" stroke-width="0.3" >THINKPAD L390</text>
<path d="M1137.0,298.3 L1141.8,303.2 L1137.0,308.1" fill="none" stroke="#dfe2e5" stroke-width="1.6"/>
<text x="1148" y="306.7" font-family="Liberation Sans" font-size="12" fill="#a6ccee" textLength="43.5" lengthAdjust="spacingAndGlyphs" stroke="#a6ccee" stroke-width="0.3" >Desktop</text>
<path d="M1200.0,298.3 L1204.8,303.2 L1200.0,308.1" fill="none" stroke="#dfe2e5" stroke-width="1.6"/>
<text x="1211" y="306.7" font-family="Liberation Sans" font-size="12" fill="#a6ccee" textLength="43.5" lengthAdjust="spacingAndGlyphs" stroke="#a6ccee" stroke-width="0.3" >Rnightly</text>
<path d="M1263.1,298.3 L1267.8999999999999,303.2 L1263.1,308.1" fill="none" stroke="#dfe2e5" stroke-width="1.6"/>
<text x="1273.2" y="306.7" font-family="Liberation Sans" font-size="12" fill="#a6ccee" textLength="7.6" lengthAdjust="spacingAndGlyphs" stroke="#a6ccee" stroke-width="0.3" >R</text>
<path d="M1304.5,294.5 L1313.5,294.5 L1317.2,297.5 L1317.2,306.8 L1313.5,309.8 L1304.5,309.8 L1300.3,306.8 L1300.3,297.5 Z" fill="#8cc6ea"/>
<path d="M1300.5,297.5 L1304.5,300 L1317,297.5 M1304.5,300 L1304.5,309.6" fill="none" stroke="#6aa8d0" stroke-width="0.8"/>
<text x="1305.3" y="306.3" font-family="Liberation Serif" font-size="10" fill="#2f5f88" textLength="7" lengthAdjust="spacingAndGlyphs" >R</text>
<rect x="1324" y="292" width="1" height="22" fill="#1d2833" />
<rect x="1329" y="305" width="1.3" height="1.3" fill="#d8dcdf" />
<rect x="1333" y="305" width="1.3" height="1.3" fill="#d8dcdf" />
<rect x="964" y="315" width="1" height="19" fill="#1d2833" />
<rect x="992" y="315" width="1" height="19" fill="#1d2833" />
<rect x="1216.5" y="315" width="1" height="19" fill="#1d2833" />
<rect x="1304.3" y="315" width="1" height="19" fill="#1d2833" />
<path d="M999,327 L1004.5,319.3 L1010,327 Z" fill="#8f979e"/>
<text x="1014" y="329.1" font-family="Liberation Sans" font-size="12" fill="#eef0f2" textLength="32" lengthAdjust="spacingAndGlyphs" stroke="#eef0f2" stroke-width="0.3" >Name</text>
<text x="1219.6" y="329.1" font-family="Liberation Sans" font-size="12" fill="#eef0f2" textLength="20.7" lengthAdjust="spacingAndGlyphs" stroke="#eef0f2" stroke-width="0.3" >Size</text>
<text x="1307.6" y="329.1" font-family="Liberation Sans" font-size="12" fill="#eef0f2" textLength="47.2" lengthAdjust="spacingAndGlyphs" stroke="#eef0f2" stroke-width="0.3" >Modified</text>
<path d="M977.5,338.3 L983,344.3 L980,344.3 L980,348.3 L986.7,348.3 L986.7,351.7 L975.8,351.7 L975.8,344.3 L972.3,344.3 Z" fill="#3a8a78" stroke="#2aa84a" stroke-width="0.8"/>
<rect x="996" y="350.8" width="1.8" height="1.8" fill="#a8c8e6"/><rect x="999.5" y="350.8" width="1.8" height="1.8" fill="#a8c8e6"/>
<rect x="940.8" y="365.8" width="12.3" height="13" rx="2.2" fill="#d9dcde"/>
<path d="M973.8,362.0 L983,362.0 L987.3,366.3 L987.3,377.2 L973.8,377.2 Z" fill="#e4e4e4"/>
<path d="M983,362.5 L983,366.3 L987,366.3" fill="none" stroke="#b8c4d0" stroke-width="0.7"/>
<circle cx="975.9" cy="368.8" r="4.7" fill="#456ea6"/>
<text x="973.6" y="372.3" font-family="Liberation Sans" font-size="8" fill="#dfe6f0" textLength="4.8" lengthAdjust="spacingAndGlyphs" >R</text>
<text x="995.5" y="377.6" font-family="Liberation Sans" font-size="13" fill="#a9c5df" textLength="51" lengthAdjust="spacingAndGlyphs" stroke="#a9c5df" stroke-width="0.3" >nightly.R</text>
<text x="1220.4" y="377.90000000000003" font-family="Liberation Sans" font-size="12" fill="#eef0f2" textLength="35" lengthAdjust="spacingAndGlyphs" stroke="#eef0f2" stroke-width="0.3" >1.9 KB</text>
<text x="1307.9" y="377.90000000000003" font-family="Liberation Sans" font-size="12" fill="#eef0f2" stroke="#eef0f2" stroke-width="0.3" >Jun 24</text>
<rect x="940.8" y="390.8" width="12.3" height="13" rx="2.2" fill="#d9dcde"/>
<path d="M973.8,387.0 L983,387.0 L987.3,391.3 L987.3,402.2 L973.8,402.2 Z" fill="#e4e4e4"/>
<path d="M983,387.5 L983,391.3 L987,391.3" fill="none" stroke="#b8c4d0" stroke-width="0.7"/>
<circle cx="975.9" cy="393.8" r="4.7" fill="#456ea6"/>
<text x="973.6" y="397.3" font-family="Liberation Sans" font-size="8" fill="#dfe6f0" textLength="4.8" lengthAdjust="spacingAndGlyphs" >R</text>
<text x="995.5" y="402.6" font-family="Liberation Sans" font-size="13" fill="#a9c5df" textLength="76" lengthAdjust="spacingAndGlyphs" stroke="#a9c5df" stroke-width="0.3" >use_nightly.R</text>
<text x="1220.4" y="402.90000000000003" font-family="Liberation Sans" font-size="12" fill="#eef0f2" textLength="32.2" lengthAdjust="spacingAndGlyphs" stroke="#eef0f2" stroke-width="0.3" >549 B</text>
<text x="1307.9" y="402.90000000000003" font-family="Liberation Sans" font-size="12" fill="#eef0f2" stroke="#eef0f2" stroke-width="0.3" >Jun 24</text>
<rect x="0" y="9" width="922" height="1" fill="#0f1c29" />
<rect x="922" y="9" width="1" height="605" fill="#0f1c29" />
<rect x="0" y="613" width="923" height="1" fill="#0f1c29" />
<rect x="0" y="622" width="922" height="1" fill="#0f1c29" />
<rect x="922" y="622" width="1" height="29" fill="#0f1c29" />
<rect x="0" y="650" width="923" height="1" fill="#0f1c29" />
<rect x="931" y="9" width="405" height="1" fill="#0f1c29" />
<rect x="930" y="9" width="1" height="224" fill="#0f1c29" />
<rect x="930" y="232" width="406" height="1" fill="#0f1c29" />
<rect x="931" y="241" width="405" height="1" fill="#0f1c29" />
<rect x="930" y="241" width="1" height="410" fill="#0f1c29" />
<path d="M53,80.3 L59.5,80.3 L56.25,85 Z" fill="#8f908a"/>
<path d="M53,546 L59.3,546 L56.15,541 Z" fill="#8f908a"/>
</svg>
</body></html>
